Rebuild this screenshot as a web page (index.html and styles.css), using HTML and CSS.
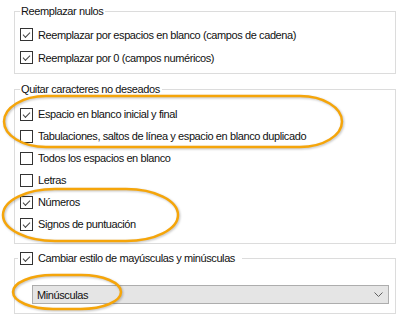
FILE: index.html
```html
<!DOCTYPE html>
<html lang="es">
<head>
    <meta charset="UTF-8">
    <meta name="viewport" content="width=device-width, initial-scale=1.0">
    <title>Limpieza de datos</title>
    <link rel="stylesheet" href="styles.css">
</head>
<body>
    <div class="panel">
        <fieldset class="group group-nulls">
            <legend>Reemplazar nulos</legend>
            <label class="option"><span class="box checked"></span>Reemplazar por espacios en blanco (campos de cadena)</label>
            <label class="option"><span class="box checked"></span>Reemplazar por 0 (campos numéricos)</label>
        </fieldset>

        <fieldset class="group group-chars">
            <legend>Quitar caracteres no deseados</legend>
            <label class="option"><span class="box checked"></span>Espacio en blanco inicial y final</label>
            <label class="option"><span class="box"></span>Tabulaciones, saltos de línea y espacio en blanco duplicado</label>
            <label class="option"><span class="box"></span>Todos los espacios en blanco</label>
            <label class="option"><span class="box"></span>Letras</label>
            <label class="option"><span class="box checked"></span>Números</label>
            <label class="option"><span class="box checked"></span>Signos de puntuación</label>
        </fieldset>

        <fieldset class="group group-case">
            <legend class="option"><span class="box checked"></span>Cambiar estilo de mayúsculas y minúsculas</legend>
            <div class="select">
                <span>Minúsculas</span>
                <svg class="chevron" width="9" height="5" viewBox="0 0 9 5"><path d="M0.5 0.5 L4.5 4.5 L8.5 0.5" fill="none" stroke="#606060" stroke-width="1"/></svg>
            </div>
        </fieldset>
    </div>

    <!-- annotation marks drawn over the dialog -->
    <svg class="marks" width="400" height="317" viewBox="0 0 400 317">
        <rect x="4" y="96" width="338" height="51" rx="42" ry="25.5" />
        <rect x="3" y="189" width="175" height="52" rx="52" ry="26" />
        <rect x="13" y="275" width="108" height="34" rx="40" ry="17" />
    </svg>
</body>
</html>
```

FILE: styles.css
```css
body {
    margin: 0;
    background: #ffffff;
    font-family: "Liberation Sans", Arial, sans-serif;
    font-size: 11px;
    letter-spacing: -0.4px;
    color: #111111;
}

.panel {
    padding: 5px 4px 0 14px;
    width: 382px;
}

.group {
    margin: 0;
    padding: 0 0 0 5px;
    border: 1px solid #dcdcdc;
    min-width: 0;
}

.group legend {
    padding: 0 2px 0 1px;
    line-height: 13px;
}

.group-nulls {
    padding-top: 5px;
    padding-bottom: 4px;
}

.group-chars {
    margin-top: 9px;
    padding-top: 7px;
    padding-bottom: 8px;
}

.group-case {
    margin-top: 8px;
    padding-top: 20px;
    padding-bottom: 9px;
}

.option {
    display: flex;
    align-items: center;
    height: 23px;
}

.group-chars .option {
    height: 22px;
}

.group-case legend.option {
    height: 13px;
    margin-left: -2px;
    padding: 0 7px 0 2px;
}

.box {
    width: 11px;
    height: 11px;
    border: 1px solid #333333;
    background: #ffffff;
    margin-right: 5px;
    flex: none;
    position: relative;
}

.box.checked::after {
    content: "";
    position: absolute;
    left: 2px;
    top: 1px;
    width: 6px;
    height: 3px;
    border-left: 1px solid #444444;
    border-bottom: 1px solid #444444;
    transform: translate(0, 2px) rotate(-45deg);
}

.select {
    display: flex;
    align-items: center;
    justify-content: space-between;
    height: 17px;
    margin: 0 6px 0 12px;
    padding: 0 5px 0 4px;
    background: #e5e5e5;
    border: 1px solid #adadad;
}

.chevron {
    display: block;
}

.marks {
    position: absolute;
    left: 0;
    top: 0;
    pointer-events: none;
}

.marks rect {
    fill: none;
    stroke: #f5a50a;
    stroke-width: 2.5;
    filter: drop-shadow(1px 1px 1px rgba(0, 0, 0, 0.25));
}
```
